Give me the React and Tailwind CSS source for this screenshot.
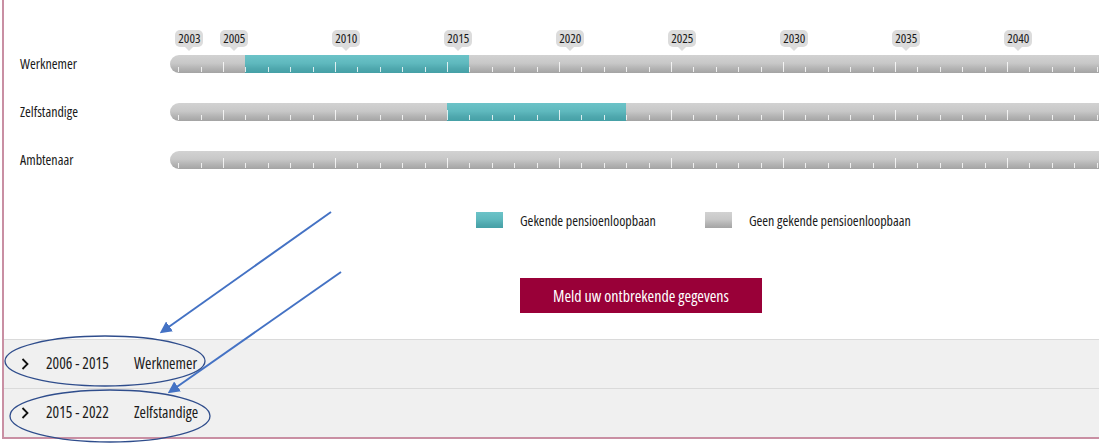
import React from 'react';

const FONT = '"Open Sans", "DejaVu Sans Condensed", sans-serif';

// timeline scale: first tick (start of 2003) sits 8px into the bar, one year = 22.4px
const START_YEAR = 2003;
const OFFSET = 8.2;
const YEAR_W = 22.4;
const BAR_W = 929;

const xOf = (year) => OFFSET + (year - START_YEAR) * YEAR_W;

const labels = [2003, 2005, 2010, 2015, 2020, 2025, 2030, 2035, 2040];
const ticks = [];
for (let y = START_YEAR; xOf(y) < BAR_W; y++) ticks.push(y);

const careers = [
  { name: 'Werknemer', periods: [[2006, 2015]] },
  { name: 'Zelfstandige', periods: [[2015, 2022]] },
  { name: 'Ambtenaar', periods: [] },
];

const GREY = 'linear-gradient(to bottom, #d2d2d2 0%, #c8c8c8 45%, #b3b3b3 75%, #a4a4a4 100%)';
const TEAL = 'linear-gradient(to bottom, #6cc3c8 0%, #5fb9be 45%, #4fa8ae 75%, #45a0a6 100%)';

const YearBubble = ({ year }) => (
  <div
    className="absolute top-0 flex flex-col items-center"
    style={{ left: xOf(year) + YEAR_W / 2 - 17, width: 34 }}
  >
    <div className="h-[17px] px-[3px] rounded-[5px] bg-[#dcdcdc] text-[13px] leading-[17px] text-[#1a1a1a]">
      {year}
    </div>
    <div className="w-0 h-0 border-l-[4px] border-r-[4px] border-t-[4px] border-l-transparent border-r-transparent border-t-[#dcdcdc]"></div>
  </div>
);

const Bar = ({ periods }) => (
  <div className="relative h-[18px] w-[929px] overflow-hidden rounded-l-[9px]" style={{ background: GREY }}>
    {periods.map(([from, to]) => (
      <div
        key={from}
        className="absolute top-0 h-full"
        style={{ left: xOf(from), width: (to - from + 1) * YEAR_W, background: TEAL }}
      ></div>
    ))}
    {ticks.map((y) => (
      <div
        key={y}
        className={y % 5 === 0 ? 'absolute bottom-[1px] w-px h-[10px] bg-white/80' : 'absolute bottom-[1px] w-px h-[5px] bg-white/80'}
        style={{ left: xOf(y) }}
      ></div>
    ))}
  </div>
);

const Chevron = () => (
  <svg width="8" height="12" viewBox="0 0 8 12" className="shrink-0">
    <path d="M1.5 1 L6.5 6 L1.5 11" fill="none" stroke="#111" strokeWidth="1.8" />
  </svg>
);

const AccordionRow = ({ years, type }) => (
  <div className="flex items-center h-[49px] border-t border-[#dadada] bg-[#f0f0f0] pl-[17px] text-[15.5px] text-[#1a1a1a]">
    <Chevron />
    <span className="ml-[17px] w-[88px]">{years}</span>
    <span>{type}</span>
  </div>
);

export default function App() {
  return (
    <div className="relative w-[1104px] h-[447px] bg-white overflow-hidden font-stretch-condensed" style={{ fontFamily: FONT }}>
      <div className="ml-[2px] w-[1097px] border-l-2 border-b-2 border-[#c98fa3]">
        {/* timeline */}
        <div className="pt-[30px] flex flex-col">
          <div className="flex h-[25px]">
            <div className="w-[166px] shrink-0"></div>
            <div className="relative w-[929px]">
              {labels.map((y) => (
                <YearBubble key={y} year={y} />
              ))}
            </div>
          </div>
          <div className="flex flex-col gap-[30px]">
            {careers.map((c) => (
              <div key={c.name} className="flex items-center h-[18px]">
                <div className="w-[166px] shrink-0 pl-[16px] text-[14px] leading-[18px] text-[#1a1a1a]">{c.name}</div>
                <Bar periods={c.periods} />
              </div>
            ))}
          </div>
        </div>

        {/* legend */}
        <div className="flex items-center mt-[43px] ml-[472px] h-[16px] text-[14px] text-[#1a1a1a]">
          <div className="w-[27px] h-[16px]" style={{ background: TEAL }}></div>
          <span className="ml-[17px]">Gekende pensioenloopbaan</span>
          <div className="ml-[49px] w-[27px] h-[16px]" style={{ background: GREY }}></div>
          <span className="ml-[17px]">Geen gekende pensioenloopbaan</span>
        </div>

        <div className="mt-[50px] ml-[516px]">
          <button className="w-[242px] h-[35px] bg-[#990038] text-white text-[16px] font-stretch-condensed" style={{ fontFamily: FONT }}>
            Meld uw ontbrekende gegevens
          </button>
        </div>

        {/* periods */}
        <div className="mt-[26px]">
          <AccordionRow years="2006 - 2015" type="Werknemer" />
          <AccordionRow years="2015 - 2022" type="Zelfstandige" />
        </div>
      </div>

      {/* annotation arrows and circles */}
      <svg className="absolute inset-0 pointer-events-none" width="1104" height="447">
        <defs>
          <marker id="head" markerWidth="6" markerHeight="6" refX="4" refY="3" orient="auto">
            <path d="M0 0 L6 3 L0 6 Z" fill="#4472c4" />
          </marker>
        </defs>
        <line x1="331" y1="212" x2="163" y2="331" stroke="#4472c4" strokeWidth="2" markerEnd="url(#head)" />
        <line x1="341" y1="272" x2="171" y2="391" stroke="#4472c4" strokeWidth="2" markerEnd="url(#head)" />
        <ellipse cx="105" cy="361" rx="100" ry="25" fill="none" stroke="#2f4d8c" strokeWidth="1.3" />
        <ellipse cx="110" cy="416" rx="100" ry="26" fill="none" stroke="#2f4d8c" strokeWidth="1.3" />
      </svg>
    </div>
  );
}
